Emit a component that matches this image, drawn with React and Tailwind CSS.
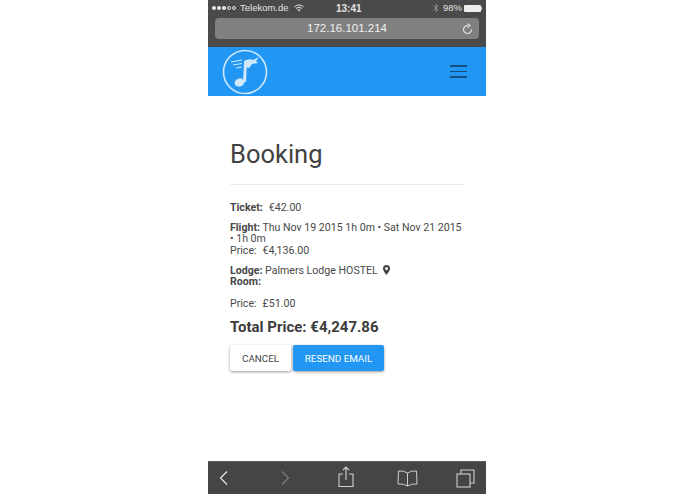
export default function App() {
  return (
    <div className="w-[695px] h-[494px] bg-white flex pl-[208px]" style={{ fontFamily: "Roboto, sans-serif" }}>
      <div className="w-[278px] h-[494px] flex flex-col bg-white">
        {/* Safari top */}
        <div className="h-[47px] bg-[#4a4a4a] flex flex-col shrink-0">
          <div className="h-[16px] flex items-center justify-between text-[9.5px] text-[#e4e4e4] pl-[4px] pr-[4px] relative" style={{ fontFamily: "'Liberation Sans', sans-serif" }}>
            <div className="flex items-center gap-[3px]">
              <span className="flex gap-[1px] items-center">
                {[1, 1, 1, 0, 0].map((f, i) => (
                  <span key={i} className={f ? "w-[4px] h-[4px] rounded-full bg-[#e8e8e8]" : "w-[4px] h-[4px] rounded-full border-[0.5px] border-[#e8e8e8]"} />
                ))}
              </span>
              <span className="ml-[1px]">Telekom.de</span>
              <svg width="10" height="8" viewBox="0 0 10 8" className="ml-[2px]" fill="none" stroke="#e8e8e8" strokeWidth="1">
                <path d="M0.5 2.8 Q5 -1 9.5 2.8" />
                <path d="M2 4.4 Q5 2 8 4.4" />
                <path d="M5 7.5 L3.4 5.8 Q5 4.6 6.6 5.8 Z" fill="#e8e8e8" stroke="none" />
              </svg>
            </div>
            <span className="absolute left-[128px] font-bold text-[10px]">13:41</span>
            <div className="flex items-center gap-[2px]">
              <svg width="6" height="10" viewBox="0 0 6 10" fill="none" stroke="#9a9a9a" strokeWidth="0.8">
                <path d="M0.5 2.5 L5 7 L3 9 V1 L5 3 L0.5 7.5" />
              </svg>
              <span className="ml-[2px]">98%</span>
              <span className="flex items-center">
                <span className="w-[17px] h-[7px] bg-[#eeeeee] rounded-[1px]" />
                <span className="w-[1px] h-[3px] bg-[#cccccc]" />
              </span>
            </div>
          </div>
          <div className="mx-[7px] mt-[2px] h-[21px] rounded-[4px] bg-[#808080] flex items-center justify-center relative text-[11.5px] text-[#f0f0f0]" style={{ fontFamily: "'Liberation Sans', sans-serif" }}>
            <span>172.16.101.214</span>
            <svg className="absolute right-[6px] top-[5px]" width="11" height="12" viewBox="0 0 11 12" fill="none" stroke="#e8e8e8" strokeWidth="1.1">
              <path d="M9.5 6.5 A4 4 0 1 1 6 2.6" />
              <path d="M5.5 0.6 L8 2.6 L5.5 4.6" />
            </svg>
          </div>
        </div>
        {/* Nav */}
        <div className="h-[49px] bg-[#2196f3] flex items-center justify-between shrink-0 pl-[14px] pr-[19px]">
          <svg width="46" height="46" viewBox="0 0 46 46" fill="none">
            <circle cx="23" cy="23" r="21.5" stroke="#cfe8fc" strokeWidth="1.6" />
            <ellipse cx="17.5" cy="33.5" rx="5" ry="4" fill="#cfe8fc" transform="rotate(-20 17.5 33.5)" />
            <path d="M21 33 L22 14 L25 13.5 L24 33 Z" fill="#cfe8fc" />
            <path d="M22 12 Q27 9 31 11 L37 8 L34 12 L36 14 L30 15 Q28 18 27 19 L22 18 Z" fill="#cfe8fc" />
            <path d="M9 13 L20 11 M11 16 L20 14.5 M14 19 L20 18" stroke="#cfe8fc" strokeWidth="1" />
          </svg>
          <div className="flex flex-col gap-[4px]">
            <span className="w-[17px] h-[1.5px] bg-[#134f80]" />
            <span className="w-[17px] h-[1.5px] bg-[#134f80]" />
            <span className="w-[17px] h-[1.5px] bg-[#134f80]" />
          </div>
        </div>
        {/* Content */}
        <div className="flex-1 px-[22px] text-[#484848] text-[10.6px] leading-[11px]">
          <h1 className="text-[25.5px] leading-[32px] font-normal text-[#424242] mt-[42px]">Booking</h1>
          <div className="h-px bg-[#ececec] mt-[14px]" />
          <p className="mt-[17px]"><b className="font-bold">Ticket:</b><span className="ml-[6px]">€42.00</span></p>
          <p className="mt-[9px]"><b className="font-bold">Flight:</b> Thu Nov 19 2015 1h 0m • Sat Nov 21 2015 • 1h 0m</p>
          <p className="mt-[1px]">Price:<span className="ml-[6px]">€4,136.00</span></p>
          <p className="mt-[9px] flex items-start gap-[5px]"><span><b className="font-bold">Lodge:</b> Palmers Lodge HOSTEL</span>
            <svg width="7" height="10" viewBox="0 0 7 10"><path fillRule="evenodd" d="M3.5 0 A3.5 3.5 0 0 1 7 3.5 C7 6 3.5 10 3.5 10 C3.5 10 0 6 0 3.5 A3.5 3.5 0 0 1 3.5 0 Z M3.5 2 A1.5 1.5 0 1 0 3.5 5 A1.5 1.5 0 1 0 3.5 2 Z" fill="#444444" /></svg>
          </p>
          <p className="font-bold">Room:</p>
          <p className="mt-[11px]">Price:<span className="ml-[6px]">£51.00</span></p>
          <p className="mt-[9px] text-[15px] leading-[18px] font-bold text-[#3c3c3c]">Total Price: €4,247.86</p>
          <div className="flex gap-[2px] mt-[9px]">
            <button className="w-[61px] h-[26px] bg-white rounded-[2px] text-[9.8px] text-[#444444] shadow-[0_1px_3px_rgba(0,0,0,0.4)]">CANCEL</button>
            <button className="w-[91px] h-[26px] bg-[#2196f3] rounded-[2px] text-[9.8px] text-white shadow-[0_1px_3px_rgba(0,0,0,0.4)]">RESEND EMAIL</button>
          </div>
        </div>
        {/* Bottom bar */}
        <div className="h-[33px] bg-[#454545] shrink-0 flex items-center justify-between pl-[11px] pr-[11px] border-t border-[#5c5c5c]">
          <svg width="10" height="16" viewBox="0 0 10 16" fill="none" stroke="#e8e8e8" strokeWidth="1.2"><path d="M8 1.5 L1.5 8 L8 14.5" /></svg>
          <svg width="10" height="16" viewBox="0 0 10 16" fill="none" stroke="#7c7c7c" strokeWidth="1.2" className="ml-[42px]"><path d="M2 1.5 L8.5 8 L2 14.5" /></svg>
          <svg width="16" height="22" viewBox="0 0 16 22" fill="none" stroke="#cfcfcf" strokeWidth="1.1" className="ml-[40px] mb-[3px]">
            <path d="M5 8 H1 V20.5 H15 V8 H11" />
            <path d="M8 14 V1.5 M5 4 L8 1 L11 4" />
          </svg>
          <svg width="21" height="17" viewBox="0 0 21 17" fill="none" stroke="#cfcfcf" strokeWidth="1" className="ml-[34px]">
            <path d="M10.5 3 Q7 0.5 1.5 1 L1 14 Q7 13.5 10.5 16 Q14 13.5 20 14 L19.5 1 Q14 0.5 10.5 3 Z" />
            <path d="M10.5 3 V16" />
          </svg>
          <svg width="19" height="19" viewBox="0 0 19 19" fill="none" stroke="#cfcfcf" strokeWidth="1.1" className="ml-[30px]">
            <rect x="1" y="5" width="13" height="13" fill="#454545" />
            <path d="M5 5 V1 H18 V14 H14" />
          </svg>
        </div>
      </div>
    </div>
  );
}
